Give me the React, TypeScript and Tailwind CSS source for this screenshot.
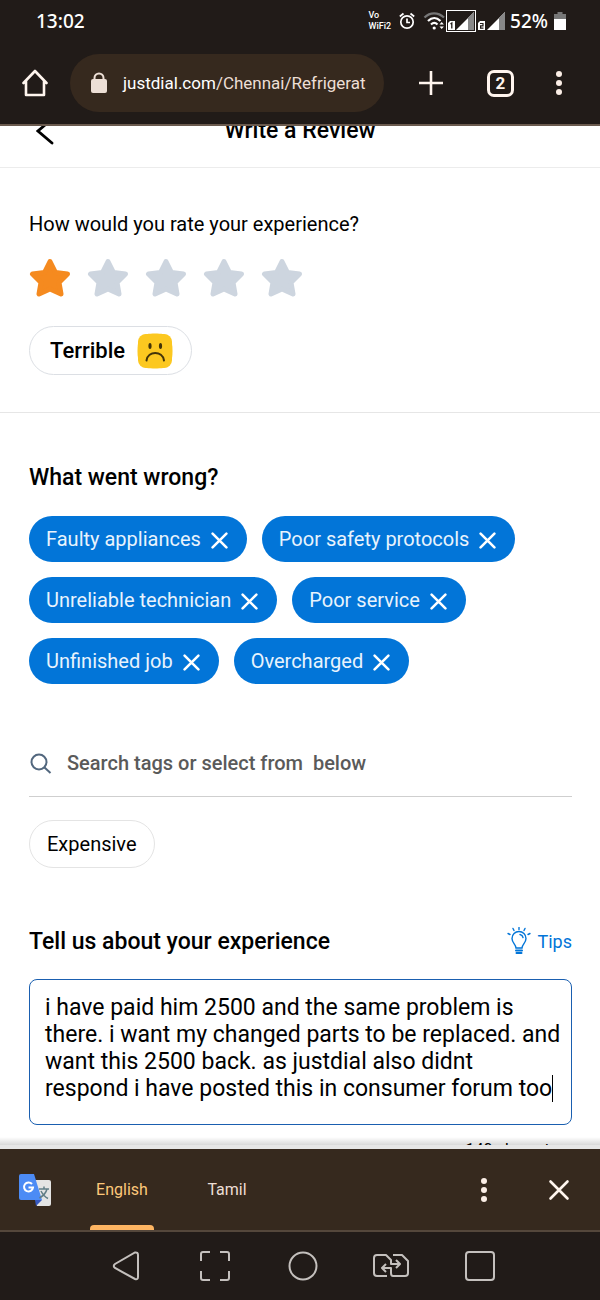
import React, { useState } from 'react';

const SELECTED_TAGS = [
  'Faulty appliances',
  'Poor safety protocols',
  'Unreliable technician',
  'Poor service',
  'Unfinished job',
  'Overcharged',
];

const REVIEW = [
  'i have paid him 2500 and the same problem is',
  'there. i want my changed parts to be replaced. and',
  'want this 2500 back. as justdial also didnt',
  'respond i have posted this in consumer forum too',
].join('\n');

const StatusIcons: React.FC = () => (
  <div className="flex items-center text-white">
    <div className="text-[9px] leading-[11px] font-medium mr-2">
      <div>Vo</div>
      <div>WiFi2</div>
    </div>
    <svg width="16" height="18" viewBox="0 0 16 18" fill="none" stroke="#fff" strokeWidth="1.7" className="mr-2">
      <circle cx="8" cy="10" r="6.2" />
      <path d="M8 6.5V10.5H11M0.800 4.500L4.500 1.500M15.200 4.500L11.500 1.500" />
    </svg>
    <svg width="23" height="20" viewBox="0 0 22 20" fill="none" strokeWidth="2.2">
      <path d="M1 6.5C6.500 1 14.500 1 20.500 6.500" stroke="#777" />
      <path d="M4.500 10C8.500 6 13 6 17 10" stroke="#fff" />
      <path d="M7.500 13.500C9.500 11.500 12 11.500 14 13.500" stroke="#fff" />
      <circle cx="10.700" cy="17" r="1.600" fill="#fff" />
      <path d="M16 13.500L18.200 11L20.400 13.500ZM16 15.500L18.200 18L20.400 15.500Z" fill="#fff" />
    </svg>
    <svg width="30" height="22" viewBox="0 0 30 22">
      <rect x="0.500" y="0.500" width="29" height="21" fill="none" stroke="#fff" />
      <path d="M10 20L28 2V20Z" fill="#fff" />
      <path d="M22 8L28 2V20H22Z" fill="#888" />
      <path d="M2 13L4 11H9V20H2Z" fill="#fff" />
      <path d="M4.500 14L5.800 13V18.500" fill="none" stroke="#211b18" strokeWidth="1.300" />
    </svg>
    <svg width="30" height="22" viewBox="0 0 30 22">
      <path d="M11 20L29 2V20Z" fill="#fff" />
      <path d="M23 8L29 2V20H23Z" fill="#888" />
      <path d="M2 13L4 11H9V20H2Z" fill="#fff" />
      <path d="M4 13.500H7V15.800H4.600V18.200H7.500" fill="none" stroke="#211b18" strokeWidth="1.200" />
    </svg>
    <span className="font-['Noto_Sans'] text-[19px] leading-6 font-medium ml-1">52%</span>
    <svg width="12" height="18" viewBox="0 0 12 18" className="ml-[6px]">
      <path d="M3.500 0H8.500V2H12V7H0V2H3.500Z" fill="#777" />
      <rect y="7" width="12" height="11" fill="#fff" />
    </svg>
  </div>
);

const Dots: React.FC = () => (
  <svg width="8" height="26" viewBox="0 0 8 26" fill="#fbeee6">
    <circle cx="4" cy="4" r="3" />
    <circle cx="4" cy="13" r="3" />
    <circle cx="4" cy="22" r="3" />
  </svg>
);

const BrowserBar: React.FC = () => (
  <div className="h-[82px] flex items-center pl-[22px] pr-[37px]">
    <button aria-label="Home" className="shrink-0">
      <svg width="26" height="28" viewBox="0 0 26 28" fill="none" stroke="#fff5ee" strokeWidth="2.600" strokeLinejoin="round" strokeLinecap="round">
        <path d="M1.500 14L13 2L24.500 14M4 12V26H22V12" />
      </svg>
    </button>
    <div className="ml-[22px] mr-[35px] h-[58px] flex-1 min-w-0 rounded-full bg-[#36291e] flex items-center pl-5">
      <svg width="18" height="22" viewBox="0 0 18 22" className="shrink-0">
        <path d="M4.500 9V6A4.500 4.500 0 0 1 13.500 6V9" fill="none" stroke="#eddfd6" strokeWidth="2" />
        <rect x="1" y="7" width="16" height="14" rx="2" fill="#eddfd6" />
      </svg>
      <a href="#url" className="ml-[15px] text-[17px] leading-6 text-[#eddfd6] whitespace-nowrap">
        <span className="text-white">justdial.com</span>/Chennai/Refrigerat
      </a>
    </div>
    <button aria-label="New tab">
      <svg width="24" height="24" viewBox="0 0 24 24" stroke="#fff5ee" strokeWidth="2.600">
        <path d="M12 0V24M0 12H24" />
      </svg>
    </button>
    <button aria-label="Tabs" className="ml-11 w-[27px] h-[27px] rounded-[7px] border-[3px] border-[#fff5ee] text-[#fff5ee] text-[17px] leading-5 font-bold">
      2
    </button>
    <button aria-label="Menu" className="ml-[41px]"><Dots /></button>
  </div>
);

const Star: React.FC<{ active: boolean }> = ({ active }) => (
  <svg width="42" height="40" viewBox="0 0 42 40">
    <path
      d="M21 3.500L26.500 14.500L38.500 16L30 24.500L32 36L21 31L10 36L12 24.500L3.500 16L15.500 14.500Z"
      className={active ? 'fill-[#f58a1f] stroke-[#f58a1f]' : 'fill-[#cdd5df] stroke-[#cdd5df]'}
      strokeWidth="5"
      strokeLinejoin="round"
    />
  </svg>
);

const TranslateBar: React.FC = () => (
  <div className="h-[83px] bg-[#36291e] border-b-2 border-[#54473b] flex items-stretch pl-[18px] pr-[30px]">
    <svg width="34" height="34" viewBox="0 0 34 34" className="self-center">
      <path d="M13 7H31A2 2 0 0 1 33 9V31A2 2 0 0 1 31 33H19Z" fill="#e4e4e4" />
      <path d="M17 27H24L18 33Z" fill="#3558c0" />
      <path d="M3 1H16L24 27H3A2 2 0 0 1 1 25V3A2 2 0 0 1 3 1Z" fill="#4c8bf5" />
      <path d="M14 11A4.500 4.500 0 1 0 15 14.500H10.500" fill="none" stroke="#fff" strokeWidth="2" />
      <path d="M21 16H31M26 13.500V16M29 16C28 20 25 23 21.500 25M23 18C24.500 21 27 24 30 25.500" fill="none" stroke="#607d86" strokeWidth="1.500" />
    </svg>
    <button className="ml-[38px] w-16 relative text-[16px] text-[#fdc87a]">
      English
      <span className="absolute left-0 right-0 bottom-0 h-[5px] rounded-t bg-[#fdb462]"></span>
    </button>
    <button className="ml-[41px] w-16 text-[16px] text-[#eddfd6]">Tamil</button>
    <div className="ml-auto flex items-center">
      <button aria-label="Translate options" className="mr-[60px]"><Dots /></button>
      <button aria-label="Close translate">
        <svg width="22" height="22" viewBox="0 0 22 22" stroke="#fff5ee" strokeWidth="2.600" strokeLinecap="round">
          <path d="M2.500 2.500L19.500 19.500M19.500 2.500L2.500 19.500" />
        </svg>
      </button>
    </div>
  </div>
);

const NavBar: React.FC = () => (
  <div className="h-[68px] grid grid-cols-5 items-center justify-items-center pl-[82px] pr-[76px]">
    <button aria-label="Back">
      <svg width="30" height="30" viewBox="0 0 30 30" fill="none" stroke="#c4c0bd" strokeWidth="2">
        <path d="M24 1.500Q27 1 27 4V26Q27 29 24 28L4 17Q1.500 15 4 13Z" />
      </svg>
    </button>
    <button aria-label="Capture">
      <svg width="30" height="30" viewBox="0 0 30 30" fill="none" stroke="#c4c0bd" strokeWidth="2">
        <path d="M1 10V3Q1 1 3 1H10M20 1H27Q29 1 29 3V10M29 20V27Q29 29 27 29H20M10 29H3Q1 29 1 27V20" />
      </svg>
    </button>
    <button aria-label="Home screen">
      <svg width="30" height="30" viewBox="0 0 30 30" fill="none" stroke="#c4c0bd" strokeWidth="2">
        <circle cx="15" cy="15" r="13.500" />
      </svg>
    </button>
    <button aria-label="Switch app">
      <svg width="36" height="24" viewBox="0 0 36 24" fill="none" stroke="#c4c0bd" strokeWidth="2" strokeLinejoin="round">
        <path d="M14 22H4Q1 22 1 19V4Q1 1 4 1H13L18 6V10H27M23 6L27 10L23 14" />
        <path d="M20 1H29L35 7V19Q35 22 32 22H20Q18 22 18 19V14H9M13 10L9 14L13 18" />
      </svg>
    </button>
    <button aria-label="Recents">
      <svg width="30" height="30" viewBox="0 0 30 30" fill="none" stroke="#c4c0bd" strokeWidth="2">
        <rect x="1" y="1" width="28" height="28" rx="3" />
      </svg>
    </button>
  </div>
);

const App: React.FC = () => {
  const [rating, setRating] = useState(1);
  const [tags, setTags] = useState<string[]>(SELECTED_TAGS);
  const [review, setReview] = useState(REVIEW);

  return (
    <div className="h-screen flex flex-col bg-[#211b18] font-['Roboto',sans-serif] text-black">
      <div className="shrink-0 border-b-2 border-[#6a5a4e]">
        <div className="h-[42px] flex items-center justify-between pl-9 pr-[34px]">
          <span className="font-['Noto_Sans'] text-[19px] leading-6 font-medium text-white">13:02</span>
          <StatusIcons />
        </div>
        <BrowserBar />
      </div>

      <main className="flex-1 min-h-0 overflow-hidden bg-white relative">
        <header className="-mt-8 h-[74px] border-b border-[#ececec] grid grid-cols-[1fr_auto_1fr] items-center px-9">
          <button aria-label="Go back">
            <svg width="18" height="28" viewBox="0 0 18 28" fill="none" stroke="#000" strokeWidth="2.800" strokeLinecap="round">
              <path d="M16 2L2 14L16 26" />
            </svg>
          </button>
          <h1 className="text-[23px] leading-6 font-medium">Write a Review</h1>
        </header>

        <section className="pl-[29px] pr-7 pt-11 pb-[37px] border-b border-[#e6e6e6]">
          <h2 className="text-[20px] leading-6">How would you rate your experience?</h2>
          <div className="flex gap-4 mt-[22px]">
            {[1, 2, 3, 4, 5].map(n => (
              <button key={n} aria-label={`${n} star`} onClick={() => setRating(n)}>
                <Star active={n <= rating} />
              </button>
            ))}
          </div>
          <div className="mt-7 w-fit h-[49px] border border-[#dcdfe4] rounded-full flex items-center pl-5 pr-[18px] gap-3">
            <span className="text-[22px] leading-6 font-medium">Terrible</span>
            <svg width="36" height="36" viewBox="0 0 36 36">
              <path d="M18 0.500C31 0.500 35.500 3 35.500 18S31 35.500 18 35.500S0.500 33 0.500 18S5 0.500 18 0.500Z" fill="#fcc820" />
              <rect x="1" y="1" width="34" height="34" rx="8" fill="#fcc820" />
              <ellipse cx="13" cy="13" rx="1.600" ry="3" fill="#433409" />
              <ellipse cx="23.500" cy="13" rx="1.600" ry="3" fill="#433409" />
              <path d="M9.500 27.500C11 17.500 25.500 17.500 27 27.500" fill="none" stroke="#433409" strokeWidth="2" strokeLinecap="round" />
            </svg>
          </div>
        </section>

        <section className="pl-[29px] pr-7 pt-[53px]">
          <h2 className="text-[23px] leading-6 font-medium">What went wrong?</h2>
          <div className="flex flex-wrap gap-[15px] mt-[26px]">
            {tags.map(tag => (
              <button
                key={tag}
                onClick={() => setTags(tags.filter(t => t !== tag))}
                className="h-[46px] rounded-full bg-[#0275d8] text-[#e8f3fd] text-[20px] leading-6 flex items-center pl-[17px] pr-[19px]"
              >
                {tag}
                <svg width="17" height="17" viewBox="0 0 16 16" stroke="#fff" strokeWidth="2.400" strokeLinecap="round" className="ml-[10px] mt-[3px]">
                  <path d="M1.500 1.500L14.500 14.500M14.500 1.500L1.500 14.500" />
                </svg>
              </button>
            ))}
          </div>

          <div className="mt-[53px] h-[60px] border-b border-[#cfcfcf] flex items-center pb-2">
            <label htmlFor="tags" aria-label="Search tags">
              <svg width="24" height="24" viewBox="0 0 24 24" fill="none" stroke="#52677e" strokeWidth="2">
                <circle cx="10" cy="11" r="7.500" />
                <path d="M15.500 16.500L21.500 22" />
              </svg>
            </label>
            <input
              id="tags"
              type="text"
              placeholder={'Search tags or select from\u00a0 below'}
              className="ml-[14px] flex-1 min-w-0 text-[20px] leading-6 font-medium outline-none placeholder:text-[#5a5a5a]"
            />
          </div>

          <button className="mt-[23px] h-12 rounded-full border border-[#e4e4e4] px-[17px] text-[20px] leading-6">Expensive</button>

          <div className="mt-[62px] flex items-center justify-between">
            <label htmlFor="review" className="text-[23px] leading-6 font-medium">Tell us about your experience</label>
            <a href="#tips" className="flex items-center gap-[6px] text-[18px] leading-6 text-[#0275d8]">
              <svg width="24" height="30" viewBox="0 0 24 30" fill="none" stroke="#0275d8" strokeWidth="1.400" strokeLinecap="round" className="-my-1">
                <path d="M9 21C9 17.500 5 16 5 11.500A7 7 0 0 1 19 11.500C19 16 15 17.500 15 21Z" />
                <path d="M9 23.500H15M9.500 26H14.500" strokeWidth="2" />
                <path d="M12 0.500V2.500M6 1.500L7 3.500M18 1.500L17 3.500M1 6.500L3 7.500M23 6.500L21 7.500M13 7.500Q15.500 8 16 10.500" />
              </svg>
              Tips
            </a>
          </div>

          <div className="relative mt-[25px]">
            <textarea
              id="review"
              value={review}
              onChange={e => setReview(e.target.value)}
              className="block w-full h-[146px] rounded-lg border border-[#1a5fb0] pl-[15px] pr-1 pt-[14px] text-[23px] leading-[27px] outline-none resize-none overflow-hidden"
            />
            <span className="absolute right-[19px] bottom-[23px] w-px h-[27px] bg-black"></span>
          </div>
          <p className="mt-[15px] text-right text-[16px] leading-5">140 characters</p>
        </section>
        <div className="absolute inset-x-0 bottom-0 h-3 border-b-4 border-[#e6e6e6] bg-linear-to-b from-transparent to-black/15"></div>
      </main>

      <footer className="shrink-0">
        <TranslateBar />
        <NavBar />
      </footer>
    </div>
  );
};

export default App;
